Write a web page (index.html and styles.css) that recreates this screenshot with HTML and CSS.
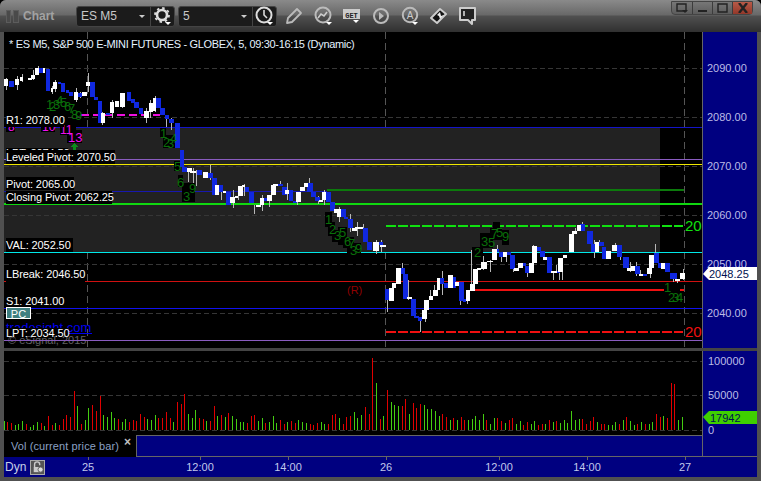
FILE: index.html
```html
<!DOCTYPE html>
<html lang="en">
<head>
<meta charset="utf-8">
<title>Chart</title>
<link rel="stylesheet" href="styles.css">
</head>
<body>
<div class="window">
  <header class="titlebar">
    <div class="handle"><span class="grip"></span><span class="grip wide"></span></div>
    <span class="app-name">Chart</span>
    <div class="combo">
      <span class="combo-value">ES M5</span><span class="caret"></span>
      <span class="combo-btn">
        <svg class="icon" viewBox="0 0 20 20"><circle cx="9" cy="9" r="5" fill="none" stroke="#ddd" stroke-width="2.6"/><circle cx="9" cy="9" r="7" fill="none" stroke="#ddd" stroke-width="1.8" stroke-dasharray="2.500 3"/><path d="M12 16h6l-3 3z" fill="#fff"/></svg>
      </span>
    </div>
    <div class="combo">
      <span class="combo-value">5</span><span class="caret"></span>
      <span class="combo-btn">
        <svg class="icon" viewBox="0 0 20 20"><circle cx="9" cy="9" r="7.5" fill="none" stroke="#ddd" stroke-width="2"/><path d="M9 4v5l3 3" fill="none" stroke="#ddd" stroke-width="1.6"/><path d="M12 16h6l-3 3z" fill="#fff"/></svg>
      </span>
    </div>
    <div class="tools">
      <svg class="icon" viewBox="0 0 20 20"><path d="M3 17l1-5L13 3l4 4-9 9z" fill="none" stroke="#bbb" stroke-width="1.8" stroke-linejoin="round"/></svg>
      <svg class="icon" viewBox="0 0 20 20"><circle cx="10" cy="9" r="7.5" fill="none" stroke="#bbb" stroke-width="2"/><path d="M5 12l3-4 3 2 3-4" fill="none" stroke="#ccc" stroke-width="1.6"/><path d="M13 16h6l-3 3z" fill="#fff"/></svg>
      <svg class="icon" viewBox="0 0 20 20"><rect x="1" y="3" width="17" height="10" fill="#ccc"/><text x="9.5" y="11.5" class="get">GET</text><path d="M11 14h6l-3 3z" fill="#fff"/></svg>
      <svg class="icon" viewBox="0 0 20 20"><circle cx="10" cy="10" r="7" fill="none" stroke="#bbb" stroke-width="2"/><path d="M8 6l5 4-5 4z" fill="#bbb"/></svg>
      <svg class="icon" viewBox="0 0 20 20"><circle cx="10" cy="9" r="7.2" fill="none" stroke="#bbb" stroke-width="2"/><text x="10" y="13" class="letter">A</text><path d="M12 16h6l-3 3z" fill="#fff"/></svg>
      <svg class="icon" viewBox="0 0 20 20"><path d="M2 12L11 3l6 5-9 9z" fill="#111" stroke="#ccc" stroke-width="2" stroke-linejoin="round"/><path d="M8 9l3-3 1 4 3-1-4 4-1-3z" fill="#eee"/></svg>
      <svg class="icon" viewBox="0 0 20 20"><path d="M2 2h15v12h-3v4l-4-4H2z" fill="#222" stroke="#ccc" stroke-width="2" stroke-linejoin="round"/><path d="M6 5v5" stroke="#eee" stroke-width="1.4"/></svg>
    </div>
    <div class="win-btns">
      <span class="win-btn"><svg class="win-glyph" viewBox="0 0 14 10"><path d="M2 1h9v7H2z" fill="none" stroke="#222" stroke-width="1.4"/><path d="M7 7h6l-3 3z" fill="#222"/></svg></span>
      <span class="win-btn"><svg class="win-glyph" viewBox="0 0 14 10"><path d="M2 8h9" stroke="#222" stroke-width="2"/></svg></span>
      <span class="win-btn"><svg class="win-glyph" viewBox="0 0 14 10"><path d="M2 1h9v8H2z" fill="none" stroke="#222" stroke-width="1.4"/></svg></span>
      <span class="win-btn close"><svg class="win-glyph" viewBox="0 0 14 10"><path d="M3 0l8 10M11 0L3 10" stroke="#222" stroke-width="2.4"/></svg></span>
    </div>
  </header>

  <main class="panes">
    <svg class="price-pane" viewBox="4 32 753 316" width="753" height="316" shape-rendering="crispEdges">
      <rect x="4" y="32" width="699" height="316" fill="#000"/>
      <path class="vgrid" d="M87.500 32V348M385.500 32V348M684.500 32V348"/>
      <rect x="4" y="127" width="656" height="125" fill="#222"/>
      <path class="hgrid" d="M4 68.500H702M4 117.500H702M4 166.500H702M4 215.500H702M4 264.500H702M4 313.500H702"/>
      <path class="lvl blue" d="M4 127.500H702"/>
      <path class="lvl purple" d="M4 159.500H702"/>
      <path class="lvl yellow" d="M4 164.500H702"/>
      <path class="lvl navy" d="M4 191.500H327"/>
      <path class="lvl dkgreen" d="M327 190H684"/>
      <path class="lvl green2" d="M4 204H702"/>
      <path class="lvl cyan" d="M4 252.500H702"/>
      <path class="lvl red1" d="M4 281.500H6M85 281.500H702"/>
      <path class="lvl red2" d="M475 290H664M680 290H684"/>
      <path class="lvl blue2" d="M4 308.500H702"/>
      <path class="dash magenta" d="M81 114.500H160"/>
      <path class="dash gdash" d="M386 226H683"/>
      <path class="dash rdash" d="M386 332H683"/>

      <path class="wick" d="M6.500 78V90M17.500 76V90M22.500 74V82M33.500 70V80M38.500 66V70M52.500 86V94M55.500 80V92M76.500 88V102M80.500 92V98M88.500 73V92M102.500 112V125M112.500 100V118M122.500 93V108M146.500 108V123M150.500 100V118M155.500 96V112M166.500 115V127M171.500 118V130M188.500 168V182M193.500 168V183M196.500 170V186M210.500 165V180M221.500 185V200M233.500 190V208M238.500 190V200M244.500 184V196M254.500 205V214M262.500 195V211M269.500 195V207M280.500 181V186M287.500 183V200M297.500 192V205M309.500 178V190M318.500 196V204M324.500 190V205M339.500 207V222M350.500 214V232M357.500 222V236M363.500 224V236M376.500 240V254M381.500 240V252M387.500 300V312M402.500 263V270M408.500 280V300M420.500 318V332M425.500 300V322M430.500 290V300M434.500 285V296M442.500 271V295M455.500 277V285M460.500 298V305M467.500 300V304M471.500 250V290M483.500 256V270M490.500 260V272M497.500 245V251M501.500 255V262M506.500 255V262M513.500 268V272M527.500 270V277M533.500 245V264M553.500 271V280M556.500 265V273M559.500 258V280M562.500 272V280M575.500 228V234M582.500 222V225M594.500 240V258M599.500 240V244M604.500 250V256M615.500 243V246M620.500 256V260M630.500 262V272M636.500 262V276M640.500 270V276M655.500 244V256M650.500 268V278M666.500 268V272M673.500 278V282M677.500 279V283M683.500 269V280"/>
      <path class="body-blue" d="M9 81H14V87H9zM39 68H43V73H39zM46 69H50V91H46zM58 82H61V84H58zM61 83H65V92H61zM66 90H69V93H66zM69 92H73V96H69zM78 93H82V97H78zM90 82H95V97H90zM94 97H98V100H94zM98 101H102V123H98zM106 113H110V115H106zM127 92H131V101H127zM131 99H135V103H131zM134 102H139V108H134zM139 108H143V114H139zM156 98H161V108H156zM160 108H165V115H160zM165 115H169V119H165zM169 119H174V123H169zM175 123H180V148H175zM180 150H184V167H180zM182 167H187V172H182zM197 170H202V175H197zM208 173H213V178H208zM212 178H217V195H212zM219 185H223V192H219zM226 192H231V205H226zM245 187H249V192H245zM249 192H254V203H249zM263 198H267V201H263zM278 184H283V186H278zM282 187H287V195H282zM289 190H293V201H289zM293 201H297V203H293zM307 183H313V192H307zM311 192H316V197H311zM315 197H320V201H315zM326 192H331V202H326zM330 202H335V211H330zM341 209H346V217H341zM344 217H348V219H344zM348 219H353V228H348zM363 228H368V242H363zM367 242H372V250H367zM378 242H383V245H378zM385 289H389V300H385zM400 268H405V274H400zM403 274H408V299H403zM411 299H416V316H411zM414 316H419V318H414zM418 317H422V321H418zM440 278H444V284H440zM444 283H448V288H444zM451 277H456V288H451zM459 282H464V301H459zM463 299H466V302H463zM484 262H487V263H484zM496 249H499V252H496zM499 252H503V257H499zM507 252H511V255H507zM510 255H515V269H510zM522 263H526V266H522zM525 266H529V273H525zM536 247H541V251H536zM540 251H545V257H540zM547 257H552V273H547zM556 271H560V273H556zM580 224H585V231H580zM587 231H593V244H587zM591 244H595V252H591zM599 242H604V246H599zM602 247H606V259H602zM617 245H622V257H617zM623 257H629V268H623zM635 266H640V274H635zM643 274H647V276H643zM654 253H659V263H654zM658 263H662V268H658zM665 263H670V272H665zM670 273H677V279H670z"/>
      <path class="body-white" d="M4 79H8V86H4zM15 79H19V85H15zM20 77H23V81H20zM28 78H32V80H28zM31 75H35V79H31zM35 68H39V75H35zM43 68H45V73H43zM51 88H53V92H51zM53 82H57V89H53zM74 92H78V100H74zM82 92H87V96H82zM86 82H90V86H86zM101 113H105V123H101zM110 102H114V113H110zM115 101H119V107H115zM120 93H125V107H120zM144 111H149V118H144zM149 103H153V112H149zM153 98H156V111H153zM187 168H192V172H187zM190 171H196V173H190zM203 172H208V178H203zM215 185H219V195H215zM223 191H226V193H223zM230 197H235V203H230zM235 196H238V198H235zM238 186H243V196H238zM242 185H245V187H242zM256 205H261V207H256zM260 198H264V205H260zM267 195H272V201H267zM271 185H276V195H271zM273 184H278V186H273zM285 190H289V194H285zM296 192H301V202H296zM300 187H305V191H300zM304 183H308V187H304zM319 200H323V202H319zM322 192H326V200H322zM334 209H337V213H334zM337 209H341V217H337zM352 228H357V231H352zM355 227H363V229H355zM373 242H379V251H373zM380 245H386V247H380zM389 288H394V301H389zM392 283H396V288H392zM396 268H401V284H396zM407 297H412V299H407zM422 310H427V319H422zM424 300H429V310H424zM429 296H433V300H429zM433 290H438V296H433zM437 278H440V290H437zM448 275H453V288H448zM455 282H459V286H455zM466 290H470V301H466zM470 284H475V291H470zM473 269H478V284H473zM477 268H481V270H477zM481 262H487V269H481zM487 261H493V262H487zM492 249H497V260H492zM503 252H507V257H503zM514 268H519V271H514zM518 263H523V268H518zM529 263H534V273H529zM532 246H537V263H532zM543 257H547V260H543zM551 271H557V273H551zM558 258H563V272H558zM563 255H567V258H563zM569 234H574V252H569zM572 231H577V234H572zM577 225H581V231H577zM595 242H599V252H595zM606 251H611V259H606zM612 245H617V251H612zM627 268H631V271H627zM631 266H635V271H631zM639 274H643V276H639zM647 268H652V274H647zM649 255H654V268H649zM661 263H665V269H661zM675 279H680V281H675zM680 273H685V279H680z"/>

      <path class="backing" d="M160 128H166V137H160zM163 135H175V148H163zM174 161H180V171H174zM178 175H183V187H178zM182 183H195V202H182zM325 212H332V227H325zM328 222H335V236H328zM332 230H340V242H332zM338 227H347V245H338zM343 237H354V248H343zM347 243H361V255H347zM472 247H483V258H472zM480 233H493V248H480zM490 228H502V240H490zM493 222H500V230H493zM502 230H509V245H502zM6 127H15V132H6zM41 127H55V132H41zM60 127H76V135H60zM67 130H82V143H67z"/>
      <text class="seq" x="46" y="109">1</text><text class="seq" x="49" y="111">2</text><text class="seq" x="53" y="109">3</text><text class="seq" x="56" y="105">4</text><text class="seq" x="60" y="107">5</text><text class="seq" x="64" y="111">6</text><text class="seq" x="68" y="113">7</text><text class="seq" x="71" y="119">8</text><text class="seq" x="75" y="120">9</text>
      <text class="seq" x="160" y="138">1</text><text class="seq" x="163" y="147">2</text><text class="seq" x="167" y="148">3</text><text class="seq" x="170" y="143">4</text><text class="seq" x="174" y="171">5</text><text class="seq" x="177" y="187">6</text><text class="seq" x="189" y="193">9</text><text class="seq" x="183" y="201">3</text>
      <text class="seq" x="325" y="224">1</text><text class="seq" x="329" y="234">2</text><text class="seq" x="334" y="240">3</text><text class="seq" x="339" y="237">5</text><text class="seq" x="344" y="246">6</text><text class="seq" x="348" y="248">7</text><text class="seq" x="350" y="255">3</text><text class="seq" x="355" y="253">9</text>
      <text class="seq" x="474" y="257">2</text><text class="seq" x="481" y="246">3</text><text class="seq" x="488" y="247">5</text><text class="seq" x="491" y="238">7</text><text class="seq" x="496" y="237">5</text><text class="seq" x="502" y="241">9</text>
      <text class="seq" x="664" y="292">1</text><text class="seq" x="668" y="302">2</text><text class="seq" x="672" y="302">3</text><text class="seq" x="676" y="302">4</text>
      <text class="hot" x="8" y="131">8</text><text class="hot" x="42" y="131">10</text><text class="hot" x="60" y="134">11</text><text class="hot big" x="68" y="142">13</text>
      <path class="arrow" d="M74.500 143L79 147H76V151H73V147H70z"/>

      <text class="dyn-r" x="347" y="294">(R)</text>
      <rect class="pc" x="6.500" y="307.500" width="24" height="11"/>
      <text class="pc-text" x="18.500" y="318">PC</text>
      <text class="link" x="6" y="332">tradesight.com</text>
      <path class="link-line" d="M6 333.500H92"/>
      <path class="label-bg" d="M6 328H68V340H6z"/>
      <text class="copy" x="8" y="344">© eSignal, 2015</text>
      <path class="lvl purple" d="M4 340.500H702"/>

      <path class="label-bg" d="M6 115H64V127H6zM6 148H68V160H6zM6 177H74V190H6zM6 191H112V204H6zM6 238H73V252H6z"/>
      <text class="lab" x="6" y="124">R1: 2078.00</text>
      <text class="lab" x="6" y="157">LPT: 2074.50</text>
      <path class="label-bg" d="M6 150H115V164H6z"/>
      <text class="lab" x="6" y="161">Leveled Pivot: 2070.50</text>
      <text class="lab" x="6" y="188">Pivot: 2065.00</text>
      <text class="lab" x="6" y="201">Closing Pivot: 2062.25</text>
      <text class="lab" x="6" y="249">VAL: 2052.50</text>
      <text class="lab" x="6" y="278">LBreak: 2046.50</text>
      <text class="lab" x="6" y="305">S1: 2041.00</text>
      <text class="lab" x="6" y="337">LPT: 2034.50</text>

      <text class="big-num g" x="685" y="231">20</text>
      <text class="big-num r" x="685" y="337">20</text>

      <text class="title" x="9" y="48">* ES M5, S&amp;P 500 E-MINI FUTURES - GLOBEX, 5, 09:30-16:15 (Dynamic)</text>

      <rect x="702" y="32" width="55" height="316" fill="#000080"/>
      <path class="axis-line" d="M702.500 32V348"/>
      <text class="ax" x="707" y="72">2090.00</text>
      <text class="ax" x="707" y="121">2080.00</text>
      <text class="ax" x="707" y="170">2070.00</text>
      <text class="ax" x="707" y="219">2060.00</text>
      <text class="ax" x="707" y="268">2050.00</text>
      <text class="ax" x="707" y="317">2040.00</text>
      <path class="tag-white" d="M703 274L709 267H757V280H709z" shape-rendering="auto"/>
      <text class="tag-text" x="709" y="278">2048.25</text>
    </svg>

    <div class="sep"></div>

    <svg class="vol-pane" viewBox="4 351 753 84" width="753" height="84" shape-rendering="crispEdges">
      <rect x="4" y="351" width="698" height="84" fill="#000"/>
      <path class="hgrid" d="M4 361.500H702M4 395.500H702M4 430.500H702"/>
      <path class="vol-g" d="M4.500 430V421M15.500 430V425M18.500 430V424M22.500 430V421M30.500 430V427M33.500 430V425M37.500 430V422M44.500 430V426M55.500 430V423M77.500 430V406M85.500 430V420M88.500 430V408M103.500 430V415M107.500 430V417M111.500 430V412M114.500 430V418M122.500 430V422M125.500 430V419M147.500 430V419M151.500 430V420M155.500 430V415M173.500 430V422M188.500 430V414M192.500 430V418M195.500 430V410M206.500 430V421M217.500 430V416M225.500 430V417M232.500 430V416M236.500 430V419M240.500 430V422M243.500 430V422M258.500 430V421M262.500 430V418M269.500 430V422M273.500 430V416M276.500 430V423M287.500 430V422M298.500 430V420M302.500 430V422M306.500 430V423M321.500 430V422M324.500 430V424M339.500 430V418M354.500 430V412M357.500 430V418M361.500 430V415M376.500 430V383M383.500 430V416M391.500 430V402M394.500 430V405M398.500 430V406M409.500 430V414M424.500 430V405M427.500 430V409M431.500 430V409M435.500 430V411M439.500 430V416M450.500 430V420M457.500 430V420M468.500 430V420M472.500 430V419M475.500 430V416M479.500 430V420M483.500 430V414M490.500 430V424M494.500 430V418M505.500 430V423M516.500 430V424M520.500 430V421M531.500 430V424M534.500 430V421M545.500 430V424M553.500 430V422M560.500 430V423M564.500 430V420M567.500 430V423M571.500 430V411M575.500 430V420M579.500 430V419M597.500 430V422M608.500 430V425M612.500 430V425M615.500 430V422M623.500 430V420M630.500 430V421M634.500 430V425M641.500 430V422M649.500 430V424M652.500 430V422M663.500 430V416M678.500 430V420M682.500 430V417"/>
      <path class="vol-r" d="M7.500 430V422M11.500 430V423M26.500 430V424M41.500 430V423M48.500 430V416M52.500 430V425M59.500 430V425M63.500 430V419M66.500 430V415M70.500 430V417M74.500 430V391M81.500 430V424M92.500 430V405M96.500 430V411M100.500 430V396M118.500 430V419M129.500 430V422M133.500 430V420M136.500 430V421M140.500 430V414M144.500 430V417M158.500 430V418M162.500 430V418M166.500 430V412M170.500 430V418M177.500 430V402M181.500 430V404M184.500 430V394M199.500 430V418M203.500 430V419M210.500 430V421M214.500 430V406M221.500 430V415M228.500 430V413M247.500 430V423M251.500 430V416M254.500 430V415M265.500 430V423M280.500 430V420M284.500 430V424M291.500 430V421M295.500 430V423M310.500 430V424M313.500 430V425M317.500 430V423M328.500 430V424M332.500 430V415M335.500 430V414M343.500 430V424M346.500 430V417M350.500 430V416M365.500 430V407M369.500 430V414M372.500 430V358M380.500 430V419M387.500 430V390M402.500 430V406M405.500 430V399M413.500 430V403M416.500 430V408M420.500 430V404M442.500 430V414M446.500 430V417M453.500 430V418M461.500 430V417M464.500 430V420M486.500 430V420M497.500 430V418M501.500 430V421M509.500 430V420M512.500 430V418M523.500 430V425M527.500 430V422M538.500 430V425M542.500 430V424M549.500 430V420M556.500 430V421M582.500 430V419M586.500 430V424M590.500 430V421M593.500 430V417M601.500 430V424M604.500 430V424M619.500 430V424M626.500 430V417M637.500 430V424M645.500 430V424M656.500 430V414M660.500 430V417M667.500 430V418M671.500 430V383M674.500 430V384"/>
      <rect x="702" y="351" width="55" height="84" fill="#000080"/>
      <path class="axis-line" d="M702.500 351V435"/>
      <text class="ax" x="708" y="365">100000</text>
      <text class="ax" x="708" y="399">50000</text>
      <text class="ax" x="708" y="434">0</text>
      <path class="tag-green" d="M703 417L709 411H757V424H709z" shape-rendering="auto"/>
      <text class="tag-text" x="710" y="422">17942</text>
    </svg>

    <div class="legend-row">
      <div class="legend-tab">
        <span class="legend-text">Vol (current price bar)</span>
        <span class="legend-close">×</span>
      </div>
      <div class="legend-rest"></div>
      <div class="axis-gutter"></div>
    </div>

    <div class="bottom-row">
      <span class="dyn">Dyn</span>
      <span class="lock">
        <svg class="lock-icon" viewBox="0 0 14 14"><path d="M3 7V4a3 3 0 0 1 6 0v1" fill="none" stroke="#ccc" stroke-width="1.6"/><rect x="2" y="7" width="8" height="6" fill="#ccc"/><circle cx="10" cy="10" r="3" fill="#ddd" stroke="#555"/></svg>
      </span>
      <svg class="time-axis" viewBox="0 458 703 19" width="703" height="19" shape-rendering="crispEdges">
        <path class="axis-line" d="M88.500 458V461M200.500 458V461M288.500 458V461M386.500 458V461M499.500 458V461M587.500 458V461M685.500 458V461"/>
        <text class="tx" x="88" y="472">25</text>
        <text class="tx" x="200" y="472">12:00</text>
        <text class="tx" x="288" y="472">14:00</text>
        <text class="tx" x="386" y="472">26</text>
        <text class="tx" x="499" y="472">12:00</text>
        <text class="tx" x="587" y="472">14:00</text>
        <text class="tx" x="685" y="472">27</text>
      </svg>
    </div>
  </main>
</div>
</body>
</html>
```

FILE: styles.css
```css
* { box-sizing: border-box; }
html, body { margin: 0; padding: 0; background: #000; }
body { width: 761px; height: 481px; overflow: hidden; font-family: "Liberation Sans", Arial, sans-serif; }

.window {
  width: 761px; height: 481px;
  display: flex; flex-direction: column;
  background: #505050;
  padding: 0 4px 4px;
  border-radius: 6px 6px 0 0;
}
.titlebar {
  height: 32px; flex: none;
  margin: 0 -4px;
  padding: 0 8px 0 6px;
  display: flex; align-items: center;
  background: linear-gradient(#8a8a8a 0, #686868 15px, #505050 16px, #303030 32px);
  border-radius: 6px 6px 0 0;
}
.handle { display: flex; gap: 2px; width: 17px; }
.grip { width: 5px; height: 13px; border: 1px solid #5c5c5c; background: #4a4a4a; }
.grip.wide { width: 6px; }
.app-name { font-size: 12px; font-weight: bold; color: #a2a2a2; margin-left: 0; width: 53px; }

.combo {
  width: 99px; height: 21px; margin-right: 3px;
  display: flex; align-items: center;
  background: #1b1b1b; border: 1px solid #444; border-radius: 3px;
}
.combo-value { font-size: 12px; color: #c8c8c8; padding-left: 4px; width: 62px; }
.caret { width: 0; height: 0; border: 3px solid transparent; border-top: 3px solid #ccc; border-bottom: 0; margin-right: 5px; }
.combo-btn { border-left: 1px solid #444; height: 100%; flex: 1; display: flex; align-items: center; justify-content: center; }
.icon { width: 20px; height: 20px; display: block; }
.tools { display: flex; gap: 9px; margin-left: 4px; }
.get { font: bold 7px "Liberation Mono", monospace; fill: #222; text-anchor: middle; }
.letter { font: 10px "Liberation Sans", sans-serif; fill: #ccc; text-anchor: middle; }

.win-btns {
  margin-left: auto; align-self: flex-start; margin-top: 1px;
  display: flex; height: 14px;
  border: 1px solid #444; border-radius: 0 0 4px 4px;
  background: linear-gradient(#777, #5c5c5c);
}
.win-btn { width: 20px; display: flex; align-items: center; justify-content: center; border-left: 1px solid #3c3c3c; }
.win-btn:first-child { border-left: 0; }
.win-btn.close { background: linear-gradient(#b85a48, #93382a); }
.win-glyph { width: 14px; height: 10px; display: block; }

.panes { flex: 1; display: flex; flex-direction: column; background: #000080; }
.price-pane, .vol-pane, .time-axis { display: block; flex: none; }
.sep { height: 3px; flex: none; background: #444; }

.vgrid { stroke: #555; stroke-dasharray: 7 4; fill: none; }
.hgrid { stroke: #363636; stroke-dasharray: 5 3; fill: none; }
.lvl { fill: none; stroke-width: 1; }
.blue { stroke: #1414c8; }
.purple { stroke: #8a5cc0; }
.yellow { stroke: #f0e800; }
.navy { stroke: #1818b0; }
.dkgreen { stroke: #0c7a0c; stroke-width: 2; }
.green2 { stroke: #10d810; stroke-width: 2; }
.cyan { stroke: #00e8e8; }
.red1 { stroke: #d01010; }
.red2 { stroke: #f01010; stroke-width: 2; }
.blue2 { stroke: #1010f0; }
.dash { fill: none; stroke-width: 2; }
.magenta { stroke: #f010e0; stroke-dasharray: 8 4; }
.gdash { stroke: #10e010; stroke-dasharray: 10 2; }
.rdash { stroke: #f01010; stroke-dasharray: 10 2; }

.wick { stroke: #b8b8b8; fill: none; }
.body-blue { fill: #1028e0; }
.body-white { fill: #fff; }
.backing { fill: #000; }
.seq { font-size: 13px; fill: #0a6e0a; }
.hot { font-size: 12px; fill: #f010f0; }
.hot.big { font-size: 13px; }
.arrow { fill: #0c8c1c; }
.dyn-r { font-size: 11px; fill: #900000; }
.pc { fill: #3f7f80; stroke: #fff; }
.pc-text { font-size: 11px; fill: #fff; text-anchor: middle; }
.link { font-size: 13px; fill: #0000f0; }
.link-line { stroke: #0000f0; }
.copy { font-size: 11px; fill: #606060; }
.label-bg { fill: #000; }
.lab { font-size: 11px; fill: #fff; letter-spacing: -0.1px; }
.big-num { font-size: 15px; }
.big-num.g { fill: #10e010; }
.big-num.r { fill: #f01010; }
.title { font-size: 11px; fill: #e4f2ff; letter-spacing: -0.33px; }

.axis-line { stroke: #666; fill: none; }
.ax { font-size: 11px; fill: #bcbce6; }
.tag-white { fill: #fff; }
.tag-green { fill: #3fd000; }
.tag-text { font-size: 11px; fill: #001050; }
.vol-g { stroke: #44cc10; fill: none; }
.vol-r { stroke: #e00000; fill: none; }

.legend-row { height: 22px; flex: none; display: flex; border-bottom: 1px solid #666; }
.legend-tab { width: 132px; background: #000; display: flex; align-items: center; padding: 4px 0 0 7px; margin-top: -4px; height: 26px; }
.legend-text { font-size: 11px; color: #8ca0c4; width: 112px; letter-spacing: 0.1px; }
.legend-close { font-size: 12px; font-weight: bold; color: #c0c0c0; position: relative; bottom: 4px; left: 1px; }
.legend-rest { width: 567px; border-left: 1px solid #666; border-right: 1px solid #666; border-top: 1px solid #666; }
.axis-gutter { flex: 1; }

.bottom-row { flex: 1; position: relative; display: flex; align-items: center; }
.time-axis { position: absolute; left: -4px; top: 0; }
.dyn { font-size: 12px; color: #c8d0e8; margin-left: 1px; width: 25px; position: relative; z-index: 1; }
.lock { width: 15px; height: 15px; border: 1px solid #aaa; background: #555; display: flex; align-items: center; justify-content: center; position: relative; z-index: 1; }
.lock-icon { width: 12px; height: 12px; display: block; }
.tx { font-size: 11px; fill: #c0c8ec; text-anchor: middle; }
```
